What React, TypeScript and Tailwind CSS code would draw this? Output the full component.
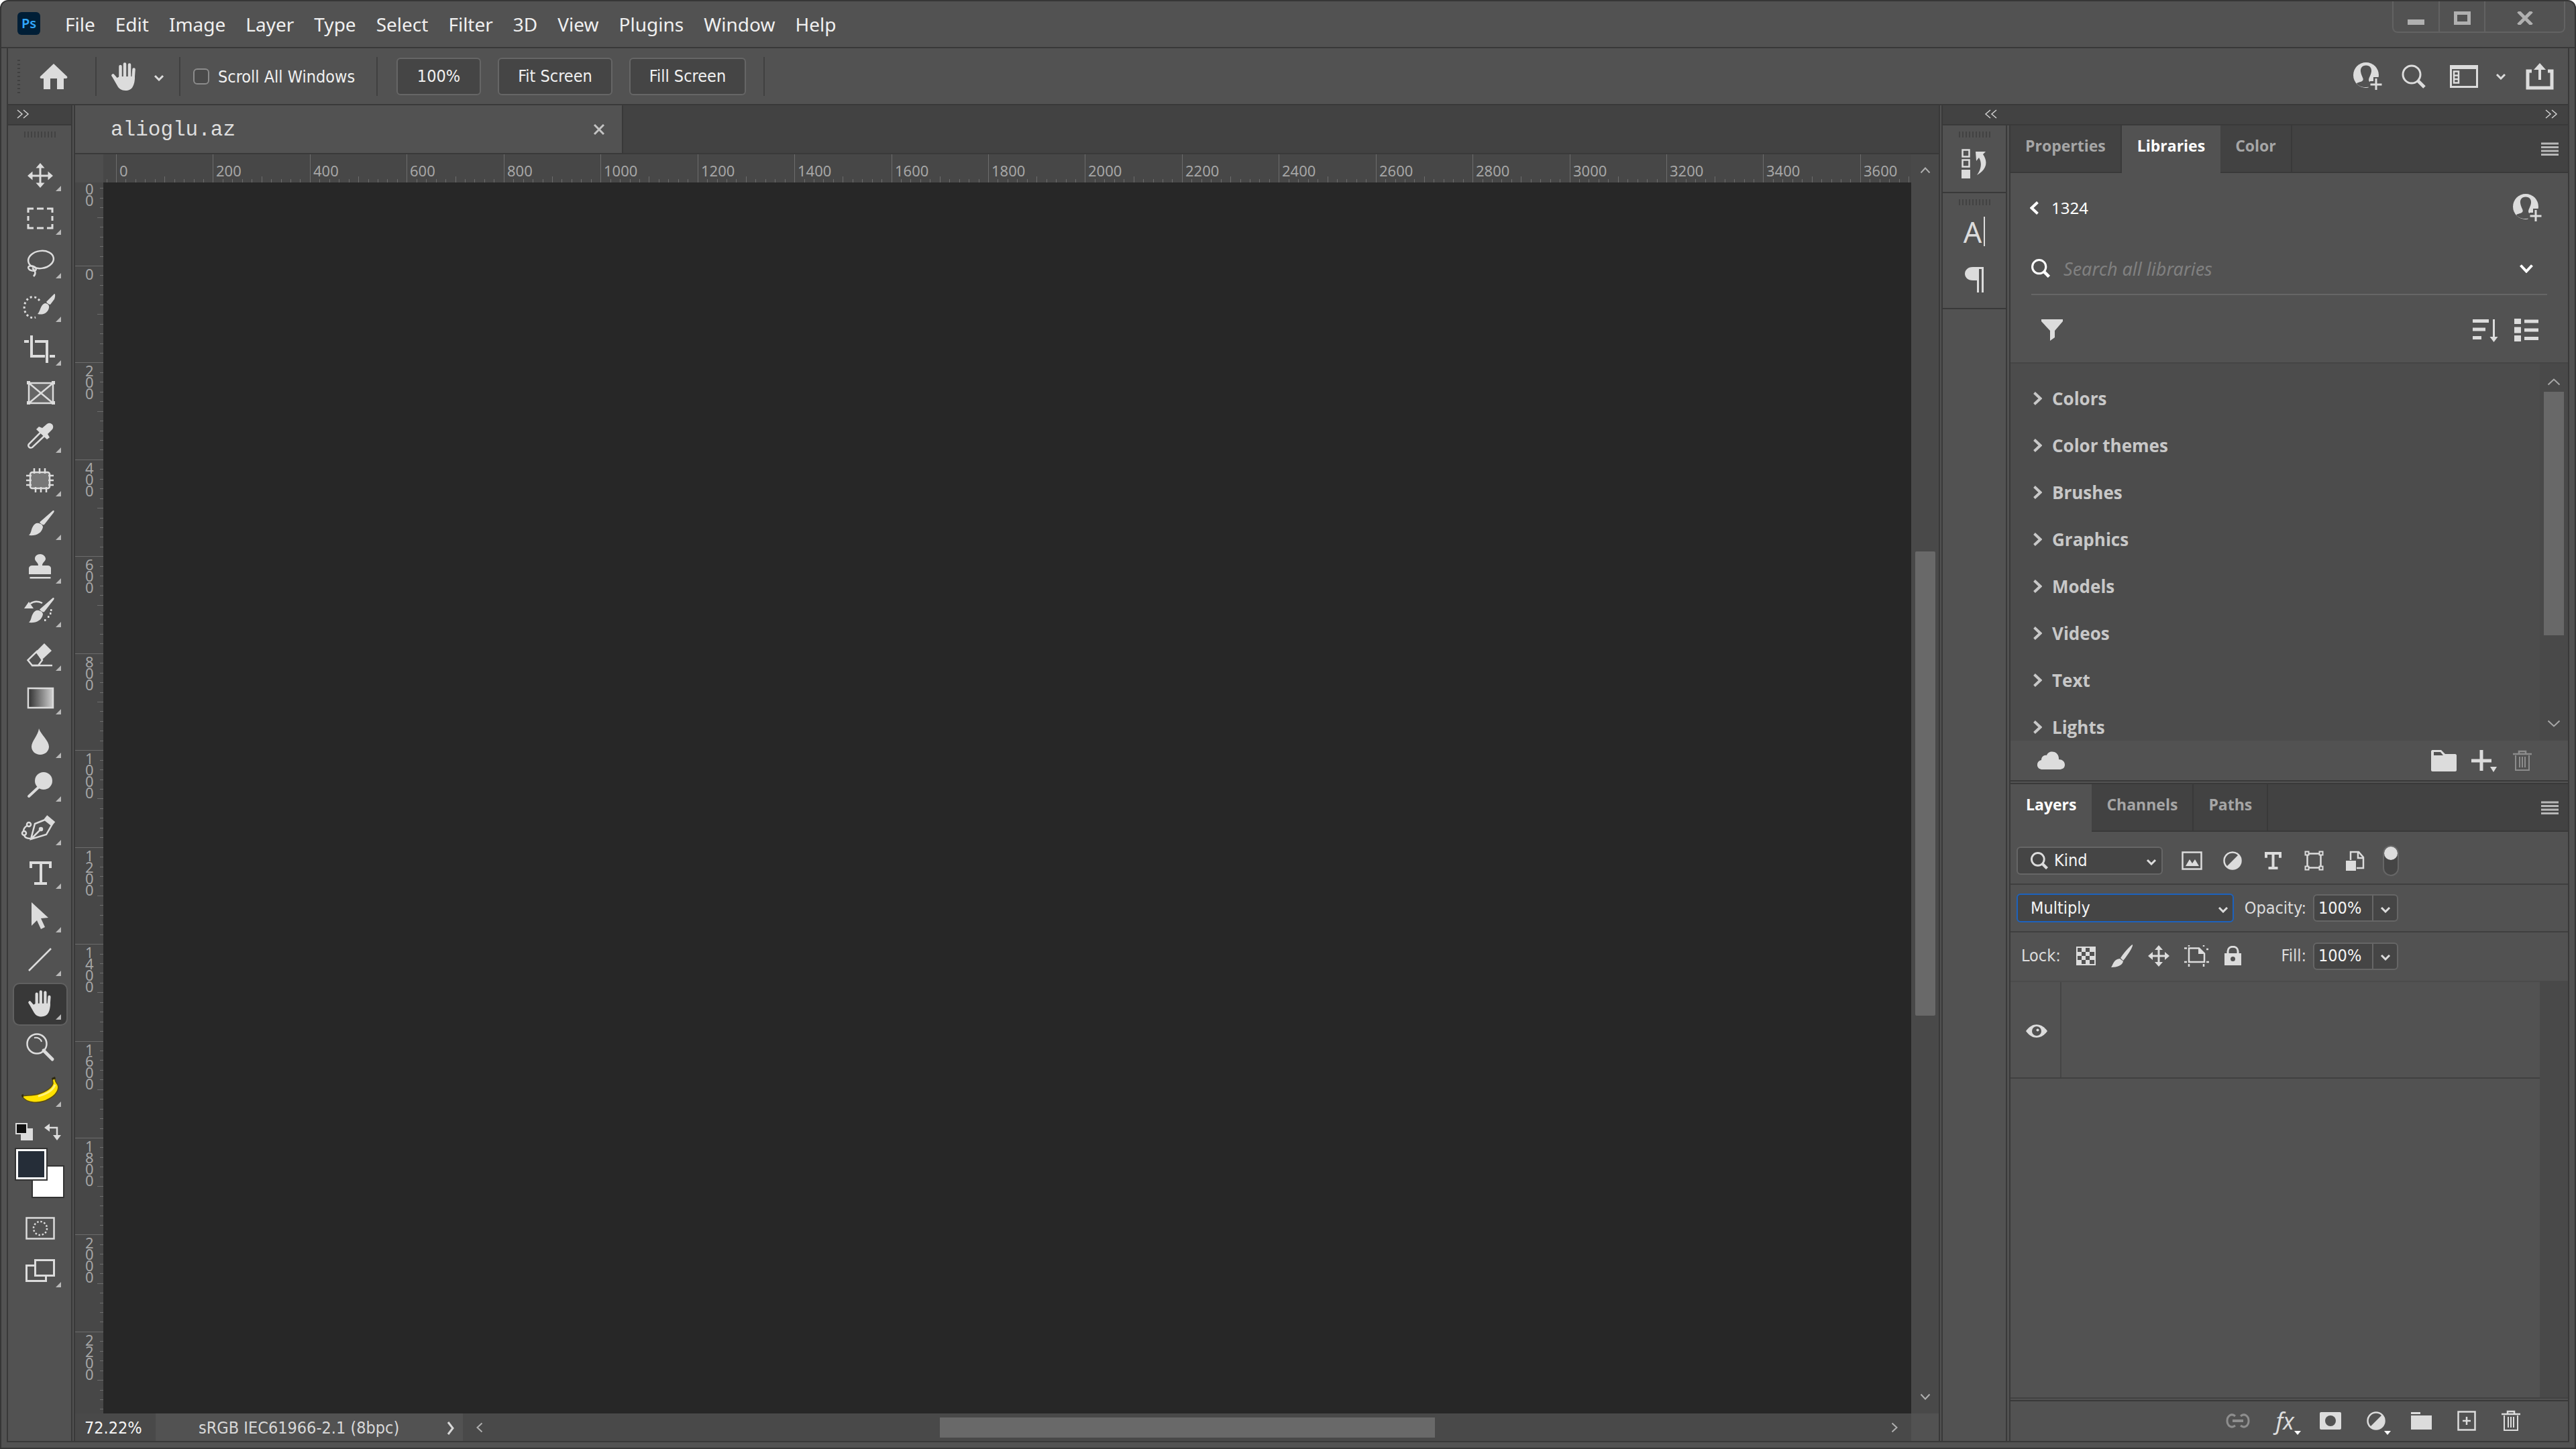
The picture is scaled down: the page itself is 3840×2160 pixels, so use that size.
import React from "react";

const UI = "font-['DejaVu_Sans_Condensed','DejaVu_Sans',sans-serif]";
const INK = "#dcdcdc";

type IconProps = { w: number; h: number; children: React.ReactNode; className?: string };

function Icon({ w, h, children, className = "" }: IconProps) {
  return (
    <svg
      width={w}
      height={h}
      viewBox={`0 0 ${w} ${h}`}
      fill="none"
      aria-hidden="true"
      className={`shrink-0 ${className}`}
    >
      {children}
    </svg>
  );
}

/* ---------- shared glyphs ---------- */

function Chevron({ dir, w = 16, h = 10, sw = 3, className = "" }: { dir: "up" | "down" | "left" | "right"; w?: number; h?: number; sw?: number; className?: string }) {
  const m = sw / 2 + 0.5;
  const d = {
    down: `M${m} ${m}L${w / 2} ${h - m}L${w - m} ${m}`,
    up: `M${m} ${h - m}L${w / 2} ${m}L${w - m} ${h - m}`,
    right: `M${m} ${m}L${w - m} ${h / 2}L${m} ${h - m}`,
    left: `M${w - m} ${m}L${m} ${h / 2}L${w - m} ${h - m}`,
  }[dir];
  return (
    <Icon w={w} h={h} className={className}>
      <path d={d} stroke="currentColor" strokeWidth={sw} />
    </Icon>
  );
}

function DoubleChevron({ left = false }: { left?: boolean }) {
  return (
    <Icon w={20} h={14}>
      <path
        d={left ? "M9 1L2 7L9 13M18 1L11 7L18 13" : "M2 1L9 7L2 13M11 1L18 7L11 13"}
        stroke="#d0d0d0"
        strokeWidth="1.500"
      />
    </Icon>
  );
}

function Grip() {
  return (
    <div className="flex justify-center gap-[3px]">
      {Array.from({ length: 10 }, (_, i) => (
        <span key={i} className="h-[9px] w-[2px] bg-[#424242]" />
      ))}
    </div>
  );
}

function SearchGlyph({ size = 36, sw = 3, color = INK }: { size?: number; sw?: number; color?: string }) {
  return (
    <svg width={size} height={size} viewBox="0 0 36 36" fill="none" aria-hidden="true" className="shrink-0">
      <circle cx="15" cy="15" r="13" stroke={color} strokeWidth={sw} />
      <path d="M24.500 24.500L34 34" stroke={color} strokeWidth={sw + 2} />
    </svg>
  );
}

function UserPlus() {
  return (
    <Icon w={44} h={42}>
      <circle cx="20" cy="19" r="19" fill={INK} />
      <path
        d="M20 4.500c-6 0-8.500 4-8 9c.4 4 2.500 8 3.500 10.500c.8 3-1 4.500-5.500 5.500c-2 .6-3 1-4 2c3 4 8 5.500 13 5.500c3 0 5-.5 7-1.500v-6c-2-1-2.500-3-1.500-6c1-2.500 3-6 3.500-10c.5-5-2-9-8-9z"
        fill="#525252"
      />
      <path d="M23 31c2 0 3-3 3-3h5v-6h13v20H24z" fill="#525252" />
      <path d="M35 24v17M26.500 33h17" stroke={INK} strokeWidth="3" />
    </Icon>
  );
}

function Bars() {
  return (
    <Icon w={26} h={20}>
      <path d="M0 2h26M0 7.500h26M0 13h26M0 18.500h26" stroke="#b8b8b8" strokeWidth="3" />
    </Icon>
  );
}

function TrashGlyph({ color = INK }: { color?: string }) {
  return (
    <Icon w={28} h={32}>
      <path d="M0 6h28M9 6V2h10v4" stroke={color} strokeWidth="2.500" />
      <path d="M4 8v22h20V8M10 10v16M14 10v16M18 10v16" stroke={color} strokeWidth="2" />
    </Icon>
  );
}

function HalfCircle() {
  return (
    <Icon w={28} h={28}>
      <circle cx="14" cy="14" r="12.500" stroke={INK} strokeWidth="2.500" />
      <path d="M23 5A12.500 12.500 0 0 1 5 23z" fill={INK} />
    </Icon>
  );
}

function TypeGlyph({ w, h, sw }: { w: number; h: number; sw: number }) {
  const s = sw / 2;
  return (
    <Icon w={w} h={h}>
      <path
        d={`M${s} ${sw * 2.2}V${s}H${w - s}V${sw * 2.2}M${w / 2} ${s}V${h - s}M${w * 0.22} ${h - s}H${w * 0.78}`}
        stroke={INK}
        strokeWidth={sw}
      />
    </Icon>
  );
}

function HandShape({ transform }: { transform?: string }) {
  return (
    <g transform={transform}>
      <path d="M2.500 19.500L10 28M13.500 6v18M20 2.500v20M27 3.500v20M33.500 10.500L32.500 24" stroke={INK} strokeWidth="4.500" strokeLinecap="round" />
      <path d="M1 21l6 3l5-3h23c0 7-1 11-3 15c-2 4-6 6-11 6c-6 0-10-3-12-7z" fill={INK} />
    </g>
  );
}

/* ---------- toolbar drawings, on a 78 x 60 board ---------- */

const brushBody = (
  <g fill={INK}>
    <path d="M58 9c2-.5 2 1 1 3L45 30c-1.500 1.500-5-1-7-3.500z" />
    <path d="M37 28c4 1 6 3 6 6c-2 9-10 13-21 12c4-4 3-8 6-13c2-4 5-6 9-5z" />
  </g>
);

const tools: { name: string; flyout: boolean; art: React.ReactNode }[] = [
  {
    name: "Move tool",
    flyout: true,
    art: (
      <g>
        <path d="M39 17v27M25 30h28" stroke={INK} strokeWidth="3" />
        <path d="M39 11l6.500 7.500h-13zM39 48l6.500-7.500h-13zM20 30l7.500-6.500v13zM58 30l-7.500-6.500v13z" fill={INK} />
      </g>
    ),
  },
  {
    name: "Rectangular marquee tool",
    flyout: true,
    art: (
      <path
        d="M21 20v-6h8M34 14h10M49 14h8v6M57 25v7M57 37v6h-8M44 43H34M29 43h-8v-6M21 32v-7"
        stroke={INK}
        strokeWidth="3"
      />
    ),
  },
  {
    name: "Lasso tool",
    flyout: true,
    art: (
      <g stroke={INK} strokeWidth="2.500">
        <ellipse cx="40" cy="25" rx="19" ry="13" transform="rotate(-8 40 25)" />
        <ellipse cx="27" cy="38" rx="6" ry="3.500" transform="rotate(15 27 38)" />
        <path d="M27 38c5 3 6 8 2 12" />
      </g>
    ),
  },
  {
    name: "Quick selection tool",
    flyout: true,
    art: (
      <g>
        <path d="M38 21a13 15.500 0 1 0-6 25" stroke={INK} strokeWidth="3" strokeDasharray="3 3.500" />
        <g fill={INK}>
          <path d="M60 11c2 0 1 5 0 8l-6 8c-2 0-5-2-6-4z" />
          <path d="M46 25c4 0 7 3 6 7c-2 8-9 11-17 9c4-3 4-14 11-16z" />
        </g>
      </g>
    ),
  },
  {
    name: "Crop tool",
    flyout: true,
    art: <path d="M26 8v31h20M15 17h7M31 17h18v32M53 39h8" stroke={INK} strokeWidth="4" />,
  },
  {
    name: "Frame tool",
    flyout: false,
    art: (
      <g>
        <path d="M22 14h36v30H22zM22 14l36 30M58 14L22 44" stroke={INK} strokeWidth="2.500" fill="#666" />
        <path d="M19 11h5v5h-5zM56 11h5v5h-5zM19 41h5v5h-5zM56 41h5v5h-5z" fill={INK} />
      </g>
    ),
  },
  {
    name: "Eyedropper tool",
    flyout: true,
    art: (
      <g>
        <path d="M39 23L22 40c-2 3 1 7 5 5l18-17" stroke={INK} strokeWidth="2.500" />
        <path d="M37 14l5 2l7-6c6-4 12 3 8 8l-7 7l3 5l-4 3l-16-15z" fill={INK} />
      </g>
    ),
  },
  {
    name: "Patch tool",
    flyout: true,
    art: (
      <g stroke={INK} strokeWidth="2.500">
        <rect x="24" y="17" width="29" height="24" rx="3" fill="#777" />
        <path d="M30 11v8M38 11v8M46 11v8M32 39v8M40 39v8M48 39v8M18 22h8M18 29h8M18 36h8M51 22h8M51 29h8M51 36h8" />
      </g>
    ),
  },
  { name: "Brush tool", flyout: true, art: brushBody },
  {
    name: "Clone stamp tool",
    flyout: true,
    art: (
      <g fill={INK}>
        <path d="M39 9c5 0 8 4 8 7c0 4-5 5-5 10h8c3 0 5 2 5 4v9H22v-9c0-2 2-4 5-4h9c0-5-5-6-5-10c0-4 3-7 8-7z" />
        <path d="M23.500 43h31v2.500h-31z" />
      </g>
    ),
  },
  {
    name: "History brush tool",
    flyout: true,
    art: (
      <g>
        {brushBody}
        <path d="M15 25l7-10l7 10z" fill={INK} />
        <path d="M24 18c5-4 12-4 18-1" stroke={INK} strokeWidth="2.500" />
        <path d="M54 26h2.500v3H54zM53 31h2.500v3H53zM50 36h2.500v3H50zM45 41h2.500v3H45z" fill={INK} />
      </g>
    ),
  },
  {
    name: "Eraser tool",
    flyout: true,
    art: (
      <g>
        <path d="M45 12l11 11l-15 14l-9-12z" fill={INK} />
        <path d="M34 24L20.500 37l6.500 8h9l6-8z" stroke={INK} strokeWidth="2.500" />
        <path d="M26 45h31" stroke={INK} strokeWidth="2.500" />
      </g>
    ),
  },
  {
    name: "Gradient tool",
    flyout: true,
    art: (
      <g>
        <defs>
          <linearGradient id="tool-gradient">
            <stop offset="0" stopColor="#303030" />
            <stop offset="1" stopColor="#d0d0d0" />
          </linearGradient>
        </defs>
        <rect x="21" y="14" width="37" height="29" fill="url(#tool-gradient)" stroke={INK} strokeWidth="2.500" />
      </g>
    ),
  },
  {
    name: "Blur tool",
    flyout: true,
    art: <path d="M37 9c3 9 15 18 15 27c0 7-6 12-13 12s-13-5-13-12c0-8 10-17 11-27z" fill={INK} />,
  },
  {
    name: "Dodge tool",
    flyout: true,
    art: (
      <g>
        <circle cx="44" cy="22" r="13" fill={INK} />
        <path d="M36 32L22 45" stroke={INK} strokeWidth="4" strokeLinecap="round" />
      </g>
    ),
  },
  {
    name: "Curvature pen tool",
    flyout: true,
    art: (
      <g stroke={INK} strokeWidth="2.500">
        <path d="M25 44l6-23l15-6l10 8l-8 14zM25 44l15-15" />
        <circle cx="40" cy="29" r="2" fill={INK} />
        <path d="M47 11l12 10" strokeWidth="7" />
        <circle cx="22" cy="22" r="3" />
        <circle cx="15" cy="35" r="3" />
        <path d="M19 24c-3 2-5 5-5 8M15 38c1 4 5 5 9 5" />
      </g>
    ),
  },
  {
    name: "Horizontal type tool",
    flyout: true,
    art: <path d="M25 22v-8h29v8M40 14v31M30 45h19" stroke={INK} strokeWidth="4" />,
  },
  {
    name: "Path selection tool",
    flyout: true,
    art: <path d="M26 8l25 23l-11 1l6 13l-6 3l-6-13l-8 8z" fill={INK} />,
  },
  {
    name: "Line tool",
    flyout: true,
    art: <path d="M22 45L55 12" stroke={INK} strokeWidth="2.500" />,
  },
  {
    name: "Hand tool",
    flyout: true,
    art: <HandShape transform="translate(21 9) scale(.94)" />,
  },
  {
    name: "Zoom tool",
    flyout: false,
    art: (
      <g stroke={INK}>
        <circle cx="34" cy="24" r="14.500" strokeWidth="2.500" />
        <path d="M30 15c6-1 10 2 11 6" strokeWidth="2" />
        <path d="M44 34l13 13" strokeWidth="5" strokeLinecap="round" />
      </g>
    ),
  },
  {
    name: "Banana tool",
    flyout: true,
    art: (
      <g>
        <path
          d="M12 37c5-2 14 0 24-3c12-4 20-9 22-16l-1-7h4c0 4 1 5 4 9c3 7-3 16-13 21c-13 8-34 7-40-4z"
          fill="#ffe100"
          stroke="#5c4d10"
          strokeWidth="1.500"
        />
        <path d="M61 20c-3 8-13 14-25 17" stroke="#fff27a" strokeWidth="3" />
        <path d="M56 10l5-2l1 3l-5 2zM11 35l3-1v4l-2 1z" fill="#2e2a10" />
      </g>
    ),
  },
];

function ToolBar() {
  return (
    <aside className="flex w-[96px] shrink-0 flex-col border-r-2 border-[#393939] bg-[#525252]">
      <div className="flex h-[30px] items-center border-b-2 border-[#393939] bg-[#424242] pb-[2px] pl-[12px]">
        <DoubleChevron />
      </div>
      <div className="h-[45px] pt-[9px]">
        <Grip />
      </div>
      <div className="flex flex-col items-center gap-[5px] pl-[2px]">
        {tools.map((t) => (
          <button
            key={t.name}
            type="button"
            aria-label={t.name}
            className={
              t.name === "Hand tool"
                ? "h-[60px] w-[78px] rounded-lg bg-[#383838] outline-2 outline-[#606060]"
                : "h-[60px] w-[78px]"
            }
          >
            <Icon w={78} h={60}>
              {t.art}
              {t.flyout && <path d="M70 45v8h-8z" fill="#b9b9b9" />}
            </Icon>
          </button>
        ))}
      </div>
      <div className="flex justify-between pt-[17px] pr-[14px] pl-[11px]">
        <button type="button" aria-label="Default colors">
          <Icon w={26} h={26}>
            <path d="M8 8h18v18H8z" fill={INK} />
            <path d="M1 1h16v15H1z" fill="#111" stroke={INK} strokeWidth="2" />
          </Icon>
        </button>
        <button type="button" aria-label="Swap colors">
          <Icon w={26} h={26}>
            <path d="M6 7h13v14" stroke={INK} strokeWidth="2.500" />
            <path d="M0 7l8-6v12zM19 26l-6-8h12z" fill={INK} />
          </Icon>
        </button>
      </div>
      <div className="relative mx-[10px] mt-[11px] h-[75px]">
        <button
          type="button"
          aria-label="Background color"
          className="absolute right-0 bottom-0 h-[49px] w-[49px] border-2 border-[#333] bg-white"
        />
        <button
          type="button"
          aria-label="Foreground color"
          className="absolute top-0 left-0 h-[49px] w-[49px] border-2 border-[#333] bg-white p-[3px]"
        >
          <span className="block h-full w-full bg-[#252d38]" />
        </button>
      </div>
      <div className="flex flex-col items-center gap-[6px] pt-[14px] pl-[2px]">
        <button type="button" aria-label="Quick mask">
          <Icon w={78} h={60}>
            <path d="M18.500 15.500h41v31h-41z" stroke={INK} strokeWidth="2.500" />
            <circle cx="39" cy="31" r="10" stroke={INK} strokeWidth="2.500" strokeDasharray="2.500 2.735" />
          </Icon>
        </button>
        <button type="button" aria-label="Screen mode">
          <Icon w={78} h={60}>
            <path d="M18.500 20.500h29v23h-29z" stroke={INK} strokeWidth="3" />
            <path d="M31.500 12.500h28v23h-28z" fill="#525252" stroke={INK} strokeWidth="3" />
            <path d="M70 45v8h-8z" fill="#b9b9b9" />
          </Icon>
        </button>
      </div>
    </aside>
  );
}

/* ---------- title and options bars ---------- */

const menus = ["File", "Edit", "Image", "Layer", "Type", "Select", "Filter", "3D", "View", "Plugins", "Window", "Help"];

function TitleBar() {
  return (
    <header className="flex h-[70px] shrink-0 items-start justify-between border-b-2 border-[#393939] pr-[14px] pl-[24px]">
      <div className="flex h-[66px] items-center">
        <div className="flex h-[34px] w-[34px] items-center justify-center rounded-md bg-[#001e36] font-['Noto_Sans',sans-serif] text-[20px] leading-none font-semibold text-[#31a8ff]">
          Ps
        </div>
        <nav className="flex gap-[30px] pt-[1px] pl-[37px] font-['Noto_Sans',sans-serif] text-[28px] leading-[36px] text-[#f0f0f0]">
          {menus.map((m) => (
            <button key={m} type="button">
              {m}
            </button>
          ))}
        </nav>
      </div>
      <div className="flex h-[47px] rounded-b-lg border-2 border-t-0 border-[#626262]">
        <button type="button" aria-label="Minimize" className="flex w-[69px] items-center justify-center border-r-2 border-[#626262] pt-[16px]">
          <span className="h-[8px] w-[25px] bg-[#b0b0b0]" />
        </button>
        <button type="button" aria-label="Maximize" className="flex w-[68px] items-center justify-center border-r-2 border-[#626262] pt-[4px]">
          <span className="h-[20px] w-[25px] border-[5px] border-[#b0b0b0]" />
        </button>
        <button type="button" aria-label="Close" className="flex w-[117px] items-center justify-center pt-[4px]">
          <Icon w={26} h={20}>
            <path d="M3 0L23 20M23 0L3 20" stroke="#b0b0b0" strokeWidth="5" />
          </Icon>
        </button>
      </div>
    </header>
  );
}

function Divider() {
  return <div className="h-[58px] w-[2px] bg-[#404040]" />;
}

function OptionsBar() {
  const pill = `h-[56px] rounded-md border-2 border-[#666] bg-[#454545] text-center text-[25px] text-[#f0f0f0] ${UI}`;
  return (
    <div className="flex h-[85px] shrink-0 items-center justify-between border-b-2 border-[#393939] pr-[21px] pl-[14px]">
      <div className="flex items-center">
        <div className="flex w-[33px] flex-col gap-[4px]">
          {Array.from({ length: 9 }, (_, i) => (
            <span key={i} className="h-[2px] w-[4px] bg-[#404040]" />
          ))}
        </div>
        <button type="button" aria-label="Home">
          <Icon w={42} h={38}>
            <path d="M21 0L41 19c1 2 0 3-2 3h-3v16H26V22H16v16H6V22H3c-2 0-3-1-2-3z" fill={INK} />
          </Icon>
        </button>
        <div className="w-[41px]" />
        <Divider />
        <button type="button" aria-label="Hand tool preset" className="flex items-center gap-[25px] px-[22px]">
          <Icon w={38} h={42}>
            <HandShape />
          </Icon>
          <Chevron dir="down" className="mt-[4px] text-[#dcdcdc]" />
        </button>
        <Divider />
        <label className={`flex items-center gap-[13px] pr-[18px] pl-[19px] text-[25px] text-[#f0f0f0] ${UI}`}>
          <input type="checkbox" className="size-[24px] appearance-none rounded-md border-2 border-[#8c8c8c] bg-[#4a4a4a]" />
          <span className="w-[218px] pt-[2px] whitespace-nowrap">Scroll All Windows</span>
        </label>
        <Divider />
        <div className="flex gap-[25px] pr-[26px] pl-[28px]">
          <button type="button" className={`${pill} w-[126px]`}>100%</button>
          <button type="button" className={`${pill} w-[171px]`}>Fit Screen</button>
          <button type="button" className={`${pill} w-[174px]`}>Fill Screen</button>
        </div>
        <Divider />
      </div>
      <div className="flex items-center">
        <button type="button" aria-label="Share with people" className="mr-[29px]">
          <UserPlus />
        </button>
        <button type="button" aria-label="Search" className="mr-[36px]">
          <SearchGlyph />
        </button>
        <button type="button" aria-label="Workspace" className="mr-[26px]">
          <Icon w={42} h={34}>
            <path d="M1.500 1.500h39v31h-39z" stroke={INK} strokeWidth="3" />
            <path d="M0 0h42v6H0z" fill={INK} />
            <path d="M6 9.500h7v17H6z" stroke={INK} strokeWidth="2.500" />
            <path d="M6 15.500h7M6 21h7" stroke={INK} strokeWidth="2.500" />
          </Icon>
        </button>
        <Chevron dir="down" className="mr-[29px] text-[#dcdcdc]" />
        <button type="button" aria-label="Share">
          <Icon w={42} h={40}>
            <path d="M9 12H3v25h36V12H33" stroke={INK} strokeWidth="5" />
            <path d="M21 25V8" stroke={INK} strokeWidth="4" />
            <path d="M21 0l9 10H12z" fill={INK} />
          </Icon>
        </button>
      </div>
    </div>
  );
}

/* ---------- document ---------- */

const STEP = 144.44;

function ticks(origin: number, length: number) {
  const out: { at: number; size: number; label?: number }[] = [];
  for (let i = -10; origin + (i * STEP) / 10 < length; i++) {
    const at = Math.round(origin + (i * STEP) / 10);
    if (i % 10 === 0) out.push({ at, size: 42, label: Math.abs(i) * 20 });
    else out.push({ at, size: i % 5 === 0 ? 9 : 5 });
  }
  return out;
}

function TopRuler() {
  return (
    <svg width="100%" height="42" className="block font-['Noto_Sans',sans-serif] text-[22px]" fill="#a6a6a6">
      {ticks(19, 2720).map((t) => (
        <g key={t.at}>
          <path d={`M${t.at}.5 ${42 - t.size}V42`} stroke="#6c6c6c" />
          {t.label !== undefined && t.at > 0 && (
            <text x={t.at + 5} y="33">
              {t.label}
            </text>
          )}
        </g>
      ))}
    </svg>
  );
}

function SideRuler() {
  const marks = ticks(124, 1834);
  return (
    <div className="relative h-full font-['Noto_Sans',sans-serif] text-[22px] leading-[17px] text-[#a6a6a6]">
      <svg width="42" height="100%" className="block" aria-hidden="true">
        {marks.map((t) => (
          <path key={t.at} d={`M${42 - t.size} ${t.at}.5H42`} stroke="#6c6c6c" />
        ))}
      </svg>
      {marks
        .filter((t) => t.label !== undefined)
        .map((t) => {
          const above = t.at < 0;
          const text = above ? String(t.label).slice(1) : String(t.label);
          return (
            <span key={t.at} className="absolute left-[15px] w-[14px] break-all" style={{ top: t.at + (above ? 21 : 4) }}>
              {text}
            </span>
          );
        })}
    </div>
  );
}

function Document() {
  return (
    <main className="flex min-w-0 flex-1 flex-col border-x-2 border-[#393939]">
      <div className="flex h-[73px] shrink-0 border-b-2 border-[#393939] bg-[#424242]">
        <div className="flex w-[817px] items-center justify-between border-r-2 border-[#393939] bg-[#525252] pr-[26px] pl-[53px]">
          <span className="pt-[3px] font-['Liberation_Mono',monospace] text-[31px] leading-[40px] text-[#dedede]">alioglu.az</span>
          <button type="button" aria-label="Close document">
            <Icon w={16} h={16}>
              <path d="M1 1L15 15M15 1L1 15" stroke="#c4c4c4" strokeWidth="3" />
            </Icon>
          </button>
        </div>
      </div>
      <div className="flex min-h-0 flex-1">
        <div className="flex w-[42px] shrink-0 flex-col bg-[#474747]">
          <div className="h-[42px] shrink-0 bg-[#4e4e4e]" />
          <div className="min-h-0 flex-1">
            <SideRuler />
          </div>
        </div>
        <div className="flex min-w-0 flex-1 flex-col">
          <div className="h-[42px] shrink-0 overflow-hidden bg-[#474747]">
            <TopRuler />
          </div>
          <div className="min-h-0 flex-1 bg-[#272727]" />
        </div>
        <div className="flex w-[41px] shrink-0 flex-col items-center bg-[#494949] pt-[19px] pb-[20px] text-[#b0b0b0]">
          <Chevron dir="up" sw={2} />
          <div className="flex w-[30px] flex-1 flex-col items-stretch">
            <div className="flex-[564]" />
            <div className="flex-[692] rounded-xs bg-[#696969]" />
            <div className="flex-[564]" />
          </div>
          <Chevron dir="down" sw={2} />
        </div>
      </div>
      <footer className={`flex h-[41px] shrink-0 bg-[#494949] text-[25px] text-[#d8d8d8] ${UI}`}>
        <div className="flex w-[120px] items-center pt-[3px] pl-[14px] text-[#f4f4f4]">72.22%</div>
        <button type="button" className="flex w-[458px] items-center justify-between bg-[#525252] pt-[3px] pr-[13px] pl-[64px]">
          <span>sRGB IEC61966-2.1 (8bpc)</span>
          <Chevron dir="right" w={11} h={22} sw={3} />
        </button>
        <div className="flex min-w-0 flex-1 items-center justify-between px-[20px] text-[#b0b0b0]">
          <Chevron dir="left" w={10} h={16} sw={2} />
          <div className="flex h-[30px] flex-1">
            <div className="flex-[680]" />
            <div className="flex-[738] bg-[#696969]" />
            <div className="flex-[679]" />
          </div>
          <Chevron dir="right" w={10} h={16} sw={2} />
        </div>
        <div className="w-[41px] bg-[#525252]" />
      </footer>
    </main>
  );
}

/* ---------- right side ---------- */

function IconDock() {
  return (
    <div className="flex w-[96px] shrink-0 flex-col border-r-2 border-[#393939] bg-[#525252]">
      <div className="flex h-[101px] flex-col items-center border-b-2 border-[#393939] pt-[9px]">
        <Grip />
        <button type="button" aria-label="History" className="mt-[17px]">
          <Icon w={38} h={44}>
            <path d="M1.500 1.500h10v10h-10zM1.500 16.500h10v10h-10z" stroke={INK} strokeWidth="2.500" />
            <path d="M0 31h13v13H0z" fill={INK} />
            <path d="M21 4h15l-4 4c7 10 7 22-9 31c6-8 8-18 3-26l-4 5z" fill={INK} />
          </Icon>
        </button>
      </div>
      <div className="flex h-[173px] flex-col items-center border-b-2 border-[#393939] pt-[9px]">
        <Grip />
        <button
          type="button"
          aria-label="Character"
          className="mt-[16px] flex h-[46px] items-center font-['Noto_Sans',sans-serif] text-[43px] leading-none text-[#dcdcdc]"
        >
          A
          <span className="ml-[3px] h-[44px] w-[2px] bg-[#dcdcdc]" />
        </button>
        <button type="button" aria-label="Paragraph" className="mt-[30px]">
          <Icon w={28} h={38}>
            <path d="M28 0v38h-3V3h-4v35h-3V20h-6C4 20 0 15 0 10S4 0 12 0z" fill={INK} />
          </Icon>
        </button>
      </div>
    </div>
  );
}

function Tabs({ items, active, menuLabel }: { items: string[]; active: string; menuLabel: string }) {
  return (
    <div className="flex h-[71px] shrink-0 bg-[#424242]">
      <div role="tablist" className="flex font-['Open_Sans',sans-serif] text-[23px] leading-[32px] font-bold">
        {items.map((t) => (
          <button
            key={t}
            type="button"
            role="tab"
            aria-selected={t === active}
            className={
              t === active
                ? "bg-[#525252] px-[23px] pb-[11px] text-white"
                : "border-r-2 border-b-2 border-[#393939] px-[22px] pb-[9px] text-[#a6a6a6]"
            }
          >
            {t}
          </button>
        ))}
      </div>
      <div className="flex flex-1 items-center justify-end border-b-2 border-[#393939] pr-[14px]">
        <button type="button" aria-label={menuLabel}>
          <Bars />
        </button>
      </div>
    </div>
  );
}

const groups = ["Colors", "Color themes", "Brushes", "Graphics", "Models", "Videos", "Text", "Lights"];

function Libraries() {
  return (
    <section className="flex h-[978px] shrink-0 flex-col border-b-2 border-[#393939]">
      <Tabs items={["Properties", "Libraries", "Color"]} active="Libraries" menuLabel="Libraries menu" />
      <div className="flex h-[104px] shrink-0 items-center justify-between pr-[39px] pl-[29px]">
        <button type="button" className="flex items-center gap-[18px] font-['Noto_Sans',sans-serif] text-[24px] leading-[32px] text-white">
          <Chevron dir="left" w={14} h={22} sw={4} />
          1324
        </button>
        <button type="button" aria-label="Invite people">
          <UserPlus />
        </button>
      </div>
      <div className="mx-[31px] flex h-[78px] shrink-0 items-center border-b-2 border-[#666] pr-[20px]">
        <SearchGlyph size={28} sw={4} color="#fff" />
        <input
          type="text"
          aria-label="Search all libraries"
          placeholder="Search all libraries"
          className="h-[60px] min-w-0 flex-1 bg-transparent px-[20px] font-['Noto_Sans',sans-serif] text-[27px] text-white italic outline-none placeholder:text-[#808080]"
        />
        <Chevron dir="down" w={22} h={14} sw={4} className="text-white" />
      </div>
      <div className="flex h-[102px] shrink-0 items-center justify-between border-b-2 border-[#454545] pt-[4px] pr-[44px] pl-[46px]">
        <button type="button" aria-label="Filter">
          <Icon w={32} h={32}>
            <path d="M0 0h32v3L20 17v10l-7 5V17L0 3z" fill={INK} />
          </Icon>
        </button>
        <div className="flex gap-[24px]">
          <button type="button" aria-label="Sort">
            <Icon w={38} h={36}>
              <path d="M0 4.500h24M0 17h19M0 29.500h13" stroke={INK} strokeWidth="5" />
              <path d="M31.500 2v30" stroke={INK} strokeWidth="3" />
              <path d="M25.500 28h12l-6 8z" fill={INK} />
            </Icon>
          </button>
          <button type="button" aria-label="List view">
            <Icon w={36} h={36}>
              <path d="M0 1h10v8H0zM0 13.500h10v9H0zM0 26h10v9H0zM15 2.500h21v5H15zM15 15.500h21v5H15zM15 28h21v5H15z" fill={INK} />
            </Icon>
          </button>
        </div>
      </div>
      <div className="flex min-h-0 flex-1 bg-[#4c4c4c]">
        <ul className="min-w-0 flex-1 overflow-hidden pt-[17px] font-['Open_Sans',sans-serif] text-[26px] leading-[32px] font-bold text-[#c8c8c8]">
          {groups.map((g) => (
            <li key={g} className="h-[70px]">
              <button type="button" className="flex h-full items-center gap-[15px] pl-[33px]">
                <Chevron dir="right" w={14} h={22} sw={4} />
                {g}
              </button>
            </li>
          ))}
        </ul>
        <div className="flex w-[42px] flex-col items-center gap-[9px] bg-[#494949] pt-[22px] pb-[20px] text-[#a8a8a8]">
          <Chevron dir="up" w={20} h={11} sw={2} />
          <div className="flex w-[30px] flex-1 flex-col">
            <div className="flex-[364] bg-[#686868]" />
            <div className="flex-[117]" />
          </div>
          <Chevron dir="down" w={20} h={11} sw={2} />
        </div>
      </div>
      <div className="flex h-[59px] shrink-0 items-center justify-between pr-[54px] pl-[40px]">
        <button type="button" aria-label="Sync status">
          <Icon w={42} h={28}>
            <path d="M8 27c-11 0-10-13-2-14c0-5 4-8 8-7c2-8 17-8 18 4c0 0 0 2 0 2c5 0 9 3 9 8s-4 7-8 7z" fill={INK} />
          </Icon>
        </button>
        <div className="flex items-center gap-[22px]">
          <button type="button" aria-label="New group">
            <Icon w={38} h={32}>
              <path d="M0 30V2c0-1 1-2 2-2h13l6 6h15c1 0 2 1 2 2v22c0 1-1 2-2 2H2c-1 0-2-1-2-2z" fill={INK} />
              <path d="M4 3h10l4 5H4z" fill="#525252" />
            </Icon>
          </button>
          <button type="button" aria-label="Add element">
            <Icon w={40} h={34}>
              <path d="M15 1v31M0 17h30" stroke={INK} strokeWidth="5" />
              <path d="M28 26h10l-5 8z" fill={INK} />
            </Icon>
          </button>
          <button type="button" aria-label="Delete element">
            <TrashGlyph color="#8c8c8c" />
          </button>
        </div>
      </div>
    </section>
  );
}

function PercentBox({ id, label, width }: { id: string; label: string; width: string }) {
  return (
    <div className={`flex items-center text-[25px] text-[#dcdcdc] ${UI}`}>
      <label htmlFor={id} className={`${width} pr-[10px] text-right`}>
        {label}
      </label>
      <div className="flex h-[41px] w-[127px] rounded-md border-2 border-[#666] bg-[#454545]">
        <input id={id} type="text" defaultValue="100%" className="w-[88px] border-r-2 border-[#666] bg-transparent pl-[6px] text-[#f4f4f4] outline-none" />
        <button type="button" aria-label={`${label} slider`} className="flex flex-1 items-center justify-center pt-[4px]">
          <Chevron dir="down" />
        </button>
      </div>
    </div>
  );
}

function Layers() {
  return (
    <section className="mt-[2px] flex min-h-0 flex-1 flex-col border-t-2 border-[#393939]">
      <Tabs items={["Layers", "Channels", "Paths"]} active="Layers" menuLabel="Layers menu" />
      <div className="flex h-[79px] shrink-0 items-center border-b-2 border-[#3f3f3f] pt-[9px] pl-[9px]">
        <div className="relative flex items-center">
          <select
            aria-label="Filter type"
            className={`h-[42px] w-[218px] appearance-none rounded-md border-2 border-[#666] bg-[#454545] pl-[54px] text-[25px] text-[#f4f4f4] ${UI}`}
          >
            <option>Kind</option>
          </select>
          <span className="pointer-events-none absolute left-[21px]">
            <SearchGlyph size={26} sw={4} />
          </span>
          <Chevron dir="down" className="pointer-events-none absolute right-[9px] mt-[4px] text-[#dcdcdc]" />
        </div>
        <div className="flex items-center gap-[31px] pl-[28px]">
          <button type="button" aria-label="Pixel layers">
            <Icon w={31} h={28}>
              <path d="M1.500 1.500h28v25h-28z" stroke={INK} strokeWidth="2.500" />
              <path d="M6 22l6-10l4 6l4-6l6 10z" fill={INK} />
            </Icon>
          </button>
          <button type="button" aria-label="Adjustment layers">
            <HalfCircle />
          </button>
          <button type="button" aria-label="Type layers" className="px-[3px]">
            <TypeGlyph w={25} h={26} sw={4} />
          </button>
          <button type="button" aria-label="Shape layers">
            <Icon w={29} h={30}>
              <path d="M5 4.500h19M5 25.500h19M4.500 5v20M24.500 5v20" stroke={INK} strokeWidth="2.500" />
              <path d="M1.500 1.500h5v5h-5zM22.500 1.500h5v5h-5zM1.500 23.500h5v5h-5zM22.500 23.500h5v5h-5z" fill="#525252" stroke={INK} strokeWidth="2" />
            </Icon>
          </button>
          <button type="button" aria-label="Smart objects" className="px-[2px]">
            <Icon w={28} h={30}>
              <path d="M7 14V2h12l7 8v16H16" stroke={INK} strokeWidth="2.500" />
              <path d="M18 2v9h8" stroke={INK} strokeWidth="2.500" />
              <path d="M0 15h15v15H0z" fill={INK} />
            </Icon>
          </button>
          <button type="button" aria-label="Toggle layer filtering" className="-ml-[6px] flex h-[46px] w-[24px] justify-center rounded-full border-2 border-[#666] bg-[#454545]">
            <span className="size-[20px] rounded-full bg-[#dcdcdc]" />
          </button>
        </div>
      </div>
      <div className="flex h-[71px] shrink-0 items-center border-b-2 border-[#3f3f3f] pl-[9px]">
        <div className="relative flex items-center">
          <select
            aria-label="Blend mode"
            className={`h-[43px] w-[324px] appearance-none rounded-md border-2 border-[#1d62bd] bg-[#454545] pl-[19px] text-[25px] text-[#f4f4f4] ${UI}`}
          >
            <option>Multiply</option>
          </select>
          <Chevron dir="down" className="pointer-events-none absolute right-[8px] mt-[4px] text-[#dcdcdc]" />
        </div>
        <PercentBox id="opacity" label="Opacity:" width="w-[118px]" />
      </div>
      <div className={`flex h-[72px] shrink-0 items-center pb-[2px] pl-[16px] text-[25px] text-[#dcdcdc] ${UI}`}>
        <span className="w-[82px]">Lock:</span>
        <div className="flex items-center gap-[22px]">
          <button type="button" aria-label="Lock transparency">
            <Icon w={29} h={28}>
              <path d="M1 1h27v26H1z" stroke={INK} strokeWidth="2" />
              <path d="M8 2h6v6H8zM20 2h7v6h-7zM2 8h6v6H2zM14 8h6v6h-6zM8 14h6v6H8zM20 14h7v6h-7zM2 20h6v6H2zM14 20h6v6h-6z" fill={INK} />
            </Icon>
          </button>
          <button type="button" aria-label="Lock image pixels">
            <Icon w={34} h={34}>
              <path d="M33 0c1 4-9 18-14 24l-4-4C20 12 30 1 33 0zM14 21l5 4c-1 6-9 9-18 9c3-3 3-12 13-13z" fill={INK} />
            </Icon>
          </button>
          <button type="button" aria-label="Lock position">
            <Icon w={32} h={32}>
              <path d="M16 4v24M4 16h24" stroke={INK} strokeWidth="3" />
              <path d="M16 0l6 7H10zM16 32l6-7H10zM0 16l7-6v12zM32 16l-7-6v12z" fill={INK} />
            </Icon>
          </button>
          <button type="button" aria-label="Lock artboard nesting">
            <Icon w={37} h={32}>
              <path d="M7 4.500h15l8 8V25H7z" stroke={INK} strokeWidth="2.500" />
              <path d="M21 4v9h9z" fill={INK} />
              <path d="M0 4.500h4M0 25h4M33 25h4M33 6h3M7 0v2M29 0v2M7 28v4M29 28v4" stroke={INK} strokeWidth="2.500" />
            </Icon>
          </button>
          <button type="button" aria-label="Lock all">
            <Icon w={27} h={30}>
              <path d="M6 12V8c0-9 15-9 15 0v4" stroke={INK} strokeWidth="3" />
              <path d="M1 11h25v18H1z" fill={INK} />
              <circle cx="13.500" cy="19.500" r="3.500" fill="#525252" />
            </Icon>
          </button>
        </div>
        <PercentBox id="fill" label="Fill:" width="w-[106px]" />
      </div>
      <div className="flex min-h-0 flex-1 border-b-2 border-[#424242]">
        <div className="min-w-0 flex-1">
          <div className="flex h-[146px] border-y-2 border-t-[#4b4b4b] border-b-[#404040]">
            <button type="button" aria-label="Layer visibility" className="flex w-[76px] items-center justify-center border-r-2 border-[#454545] pt-[4px] pl-[3px]">
              <Icon w={32} h={20}>
                <path d="M0 10C9-3 23-3 32 10C23 23 9 23 0 10z" fill={INK} />
                <circle cx="16" cy="10" r="7" fill="#525252" />
                <circle cx="17.500" cy="8.500" r="2" fill={INK} />
              </Icon>
            </button>
          </div>
        </div>
        <div className="w-[42px] bg-[#494949]" />
      </div>
      <div className="mt-[2px] flex h-[61px] shrink-0 items-center justify-end gap-[38px] border-t-2 border-[#393939] pr-[71px] pb-[2px]">
        <button type="button" aria-label="Link layers">
          <Icon w={36} h={22}>
            <path d="M14 4C8-1 2 4 2 11s6 12 12 7M22 4c6-5 12 0 12 7s-6 12-12 7" stroke="#8e8e8e" strokeWidth="3" />
            <path d="M10 11h16" stroke="#8e8e8e" strokeWidth="4" />
          </Icon>
        </button>
        <button
          type="button"
          aria-label="Layer style"
          className="relative w-[28px] font-['Noto_Sans',sans-serif] text-[34px] leading-[40px] text-[#dcdcdc] italic"
        >
          fx
          <svg width="10" height="6" viewBox="0 0 10 6" className="absolute right-[-10px] bottom-[-1px]" aria-hidden="true">
            <path d="M0 0h10L5 6z" fill="#fff" />
          </svg>
        </button>
        <button type="button" aria-label="Add mask">
          <Icon w={32} h={26}>
            <rect width="32" height="26" rx="2" fill={INK} />
            <circle cx="16" cy="13" r="8" fill="#525252" />
          </Icon>
        </button>
        <button type="button" aria-label="New adjustment layer" className="relative">
          <HalfCircle />
          <svg width="10" height="6" viewBox="0 0 10 6" className="absolute right-[-8px] bottom-[-7px]" aria-hidden="true">
            <path d="M0 0h10L5 6z" fill="#fff" />
          </svg>
        </button>
        <button type="button" aria-label="New group">
          <Icon w={31} h={26}>
            <path d="M0 0h14v3H0zM0 5h31v21H0z" fill={INK} />
          </Icon>
        </button>
        <button type="button" aria-label="New layer">
          <Icon w={28} h={30}>
            <path d="M1.500 1.500h25v27h-25zM14 9v12M8 15h12" stroke={INK} strokeWidth="2.500" />
          </Icon>
        </button>
        <button type="button" aria-label="Delete layer">
          <TrashGlyph />
        </button>
      </div>
    </section>
  );
}

export default function App() {
  return (
    <div className="flex h-screen w-full flex-col overflow-hidden rounded-t-xl border-2 border-[#363636] bg-[#525252]">
      <TitleBar />
      <div className="mx-[8px] mb-[8px] flex min-h-0 flex-1 flex-col border-x-2 border-b-2 border-[#393939]">
        <OptionsBar />
        <div className="flex min-h-0 flex-1 gap-[2px]">
          <ToolBar />
          <Document />
          <div className="flex w-[934px] shrink-0 flex-col border-l-2 border-[#393939]">
            <div className="flex h-[30px] shrink-0 items-center justify-between border-b-2 border-[#393939] bg-[#424242] pr-[15px] pb-[2px] pl-[62px]">
              <DoubleChevron left />
              <DoubleChevron />
            </div>
            <div className="flex min-h-0 flex-1 gap-[3px]">
              <IconDock />
              <div className="flex min-w-0 flex-1 flex-col border-l-2 border-[#393939]">
                <Libraries />
                <Layers />
              </div>
            </div>
          </div>
        </div>
      </div>
    </div>
  );
}
